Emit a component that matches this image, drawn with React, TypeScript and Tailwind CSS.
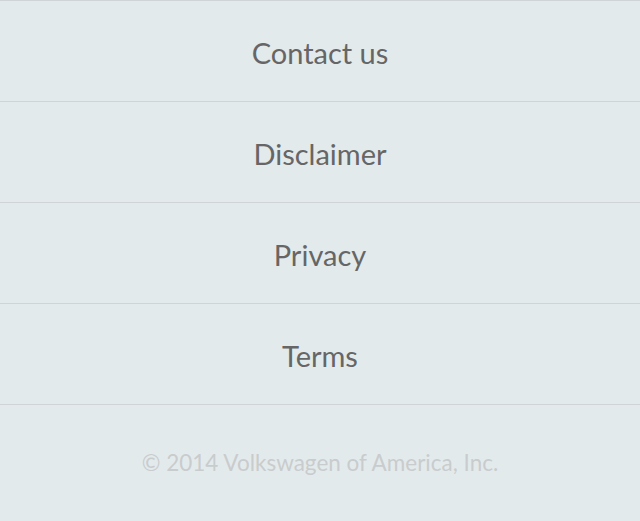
const LINKS = ['Contact us', 'Disclaimer', 'Privacy', 'Terms'];

export default function App() {
  return (
    <div className="min-h-[521px] w-full bg-[#e3eaec]" style={{ fontFamily: 'Lato, "Noto Sans", sans-serif' }}>
      <ul className="border-t border-[#cfd5d7]">
        {LINKS.map(l => (
          <li key={l} className="h-[101px] flex items-center justify-center border-b border-[#cfd5d7] pt-[3px]">
            <a className="text-[29px] text-[#666666]">{l}</a>
          </li>
        ))}
      </ul>
      <div className="h-[116px] flex items-center justify-center pb-[1px]">
        <span className="text-[22.5px] text-[#c9cccd]">© 2014 Volkswagen of America, Inc.</span>
      </div>
    </div>
  );
}
